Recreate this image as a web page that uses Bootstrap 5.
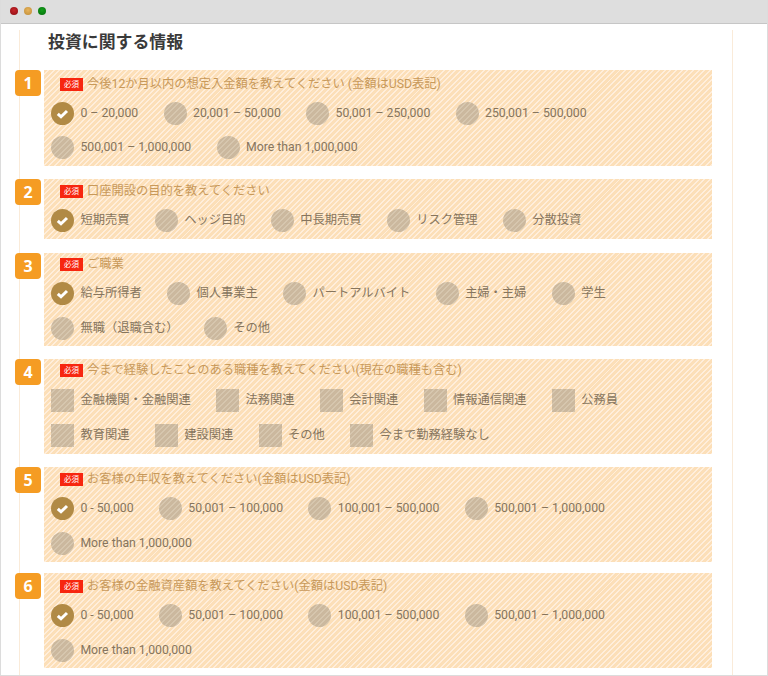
<!DOCTYPE html>
<html lang="ja"><head><meta charset="utf-8"><title>投資に関する情報</title>
<link href="https://cdn.jsdelivr.net/npm/bootstrap@5.3.0/dist/css/bootstrap.min.css" rel="stylesheet">
<style>
html,body{height:676px;overflow:hidden;background:#fff}
body{font-family:Roboto,"Noto Sans CJK JP",sans-serif;font-size:12.25px;line-height:18px;color:#86755e}
.shell{height:676px;border:1px solid #dcdcdc;border-top:0;overflow:hidden}
.chrome{height:24px;margin:0 -1px;background:#dedede;border-bottom:1px solid #c6c6c6;padding:0 0 1px 10px;gap:6px}
.dot{width:8px;height:8px;border-radius:50%}
.dot-r{background:radial-gradient(circle at 50% 40%,#c9252b,#8a0d12)}
.dot-y{background:radial-gradient(circle at 50% 40%,#e8b45c,#bd8a35)}
.dot-g{background:radial-gradient(circle at 50% 40%,#12a01a,#066c0c)}
.sheet{margin-left:18px;width:714px;height:660px;border-left:1px solid #faebd9;border-right:1px solid #faebd9}
.sheet-title{font-size:16.9px;font-weight:700;line-height:24px;color:#3a3a3a;margin:6px 0 16px 28px}
.qrow{margin-left:-5px;width:698px;margin-bottom:13px;gap:3px}
.gap-14{margin-bottom:14px}
.gap-11{margin-bottom:11px}
.qnum{flex:0 0 26px;height:26px;background:#f59c23;border-radius:4px;color:#fff;font-family:"Open Sans","Liberation Sans",sans-serif;font-weight:700;font-size:16px;line-height:26px;text-align:center}
.qbox{flex:0 0 668px;background:repeating-linear-gradient(135deg,#fcdfb8 0 2.6px,#ffeedb 2.6px 4px);padding:0 7px 7px}
.qbox.pad-6{padding-bottom:6px}
.qhead{padding-left:9px;color:#c8995a;gap:4px;padding-top:2px;height:29px}
.head-a{height:31px;padding-top:5px}
.head-c{height:28px}
.head-d{height:30px;padding-top:4px}
.head-e{padding-top:3px}
.req{flex:0 0 23px;height:13px;margin-top:2.5px;background:#f7260f;color:#fff;font-size:7.5px;line-height:13px;text-align:center}
.opts{row-gap:11px}
.opts-tight{row-gap:10px}
.optline{column-gap:25.4px}
.opt{height:24px;align-items:center;gap:6.4px;white-space:nowrap}
.mk{flex:0 0 23px;width:23px;height:23px;background:repeating-linear-gradient(135deg,#cbb89e 0 2.6px,#d6c6ae 2.6px 4px)}
.mk.rnd{border-radius:50%}
.mk.on{background:#b18a45}
.mk svg{display:block}
</style></head><body>
<div class="shell">
<div class="chrome d-flex align-items-center"><span class="dot dot-r"></span><span class="dot dot-y"></span><span class="dot dot-g"></span></div>
<div class="sheet">
<div class="sheet-title">投資に関する情報</div>

<div class="qrow d-flex align-items-start">
<div class="qnum">1</div><div class="qbox">
<div class="qhead head-a d-flex"><span class="req">必須</span><span>今後12か月以内の想定入金額を教えてください (金額はUSD表記)</span></div>
<div class="opts opts-tight d-flex flex-column">
<div class="optline d-flex">
<div class="opt d-flex"><span class="mk rnd on"><svg viewBox="0 0 23 23" width="23" height="23"><path d="M6.8 11.8l3.2 3 6-5.8" fill="none" stroke="#fff" stroke-width="3"/></svg></span>0 – 20,000</div>
<div class="opt d-flex"><span class="mk rnd"></span>20,001 – 50,000</div>
<div class="opt d-flex"><span class="mk rnd"></span>50,001 – 250,000</div>
<div class="opt d-flex"><span class="mk rnd"></span>250,001 – 500,000</div>
</div><div class="optline d-flex">
<div class="opt d-flex"><span class="mk rnd"></span>500,001 – 1,000,000</div>
<div class="opt d-flex"><span class="mk rnd"></span>More than 1,000,000</div>
</div></div></div></div>

<div class="qrow gap-14 d-flex align-items-start">
<div class="qnum">2</div><div class="qbox">
<div class="qhead head-e d-flex"><span class="req">必須</span><span>口座開設の目的を教えてください</span></div>
<div class="opts d-flex flex-column">
<div class="optline d-flex">
<div class="opt d-flex"><span class="mk rnd on"><svg viewBox="0 0 23 23" width="23" height="23"><path d="M6.8 11.8l3.2 3 6-5.8" fill="none" stroke="#fff" stroke-width="3"/></svg></span>短期売買</div>
<div class="opt d-flex"><span class="mk rnd"></span>ヘッジ目的</div>
<div class="opt d-flex"><span class="mk rnd"></span>中長期売買</div>
<div class="opt d-flex"><span class="mk rnd"></span>リスク管理</div>
<div class="opt d-flex"><span class="mk rnd"></span>分散投資</div>
</div></div></div></div>

<div class="qrow d-flex align-items-start">
<div class="qnum">3</div><div class="qbox pad-6">
<div class="qhead head-c d-flex"><span class="req">必須</span><span>ご職業</span></div>
<div class="opts d-flex flex-column">
<div class="optline d-flex">
<div class="opt d-flex"><span class="mk rnd on"><svg viewBox="0 0 23 23" width="23" height="23"><path d="M6.8 11.8l3.2 3 6-5.8" fill="none" stroke="#fff" stroke-width="3"/></svg></span>給与所得者</div>
<div class="opt d-flex"><span class="mk rnd"></span>個人事業主</div>
<div class="opt d-flex"><span class="mk rnd"></span>パートアルバイト</div>
<div class="opt d-flex"><span class="mk rnd"></span>主婦・主婦</div>
<div class="opt d-flex"><span class="mk rnd"></span>学生</div>
</div><div class="optline d-flex">
<div class="opt d-flex"><span class="mk rnd"></span>無職（退職含む）</div>
<div class="opt d-flex"><span class="mk rnd"></span>その他</div>
</div></div></div></div>

<div class="qrow d-flex align-items-start">
<div class="qnum">4</div><div class="qbox">
<div class="qhead d-flex"><span class="req">必須</span><span>今まで経験したことのある職種を教えてください(現在の職種も含む)</span></div>
<div class="opts d-flex flex-column">
<div class="optline d-flex">
<div class="opt d-flex"><span class="mk"></span>金融機関・金融関連</div>
<div class="opt d-flex"><span class="mk"></span>法務関連</div>
<div class="opt d-flex"><span class="mk"></span>会計関連</div>
<div class="opt d-flex"><span class="mk"></span>情報通信関連</div>
<div class="opt d-flex"><span class="mk"></span>公務員</div>
</div><div class="optline d-flex">
<div class="opt d-flex"><span class="mk"></span>教育関連</div>
<div class="opt d-flex"><span class="mk"></span>建設関連</div>
<div class="opt d-flex"><span class="mk"></span>その他</div>
<div class="opt d-flex"><span class="mk"></span>今まで勤務経験なし</div>
</div></div></div></div>

<div class="qrow gap-11 d-flex align-items-start">
<div class="qnum">5</div><div class="qbox">
<div class="qhead head-e d-flex"><span class="req">必須</span><span>お客様の年収を教えてください(金額はUSD表記)</span></div>
<div class="opts d-flex flex-column">
<div class="optline d-flex">
<div class="opt d-flex"><span class="mk rnd on"><svg viewBox="0 0 23 23" width="23" height="23"><path d="M6.8 11.8l3.2 3 6-5.8" fill="none" stroke="#fff" stroke-width="3"/></svg></span>0 - 50,000</div>
<div class="opt d-flex"><span class="mk rnd"></span>50,001 – 100,000</div>
<div class="opt d-flex"><span class="mk rnd"></span>100,001 – 500,000</div>
<div class="opt d-flex"><span class="mk rnd"></span>500,001 – 1,000,000</div>
</div><div class="optline d-flex">
<div class="opt d-flex"><span class="mk rnd"></span>More than 1,000,000</div>
</div></div></div></div>

<div class="qrow d-flex align-items-start">
<div class="qnum">6</div><div class="qbox pad-6">
<div class="qhead head-d d-flex"><span class="req">必須</span><span>お客様の金融資産額を教えてください(金額はUSD表記)</span></div>
<div class="opts d-flex flex-column">
<div class="optline d-flex">
<div class="opt d-flex"><span class="mk rnd on"><svg viewBox="0 0 23 23" width="23" height="23"><path d="M6.8 11.8l3.2 3 6-5.8" fill="none" stroke="#fff" stroke-width="3"/></svg></span>0 - 50,000</div>
<div class="opt d-flex"><span class="mk rnd"></span>50,001 – 100,000</div>
<div class="opt d-flex"><span class="mk rnd"></span>100,001 – 500,000</div>
<div class="opt d-flex"><span class="mk rnd"></span>500,001 – 1,000,000</div>
</div><div class="optline d-flex">
<div class="opt d-flex"><span class="mk rnd"></span>More than 1,000,000</div>
</div></div></div></div>

</div></div>
<script src="https://cdn.jsdelivr.net/npm/bootstrap@5.3.0/dist/js/bootstrap.bundle.min.js"></script>
</body></html>
